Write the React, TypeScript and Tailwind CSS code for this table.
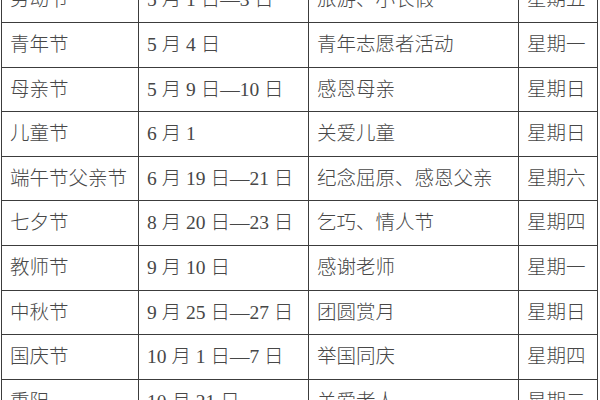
const rows: [string, string, string, string][] = [
  ["劳动节", "5 月 1 日—3 日", "旅游、小长假", "星期五"],
  ["青年节", "5 月 4 日", "青年志愿者活动", "星期一"],
  ["母亲节", "5 月 9 日—10 日", "感恩母亲", "星期日"],
  ["儿童节", "6 月 1", "关爱儿童", "星期日"],
  ["端午节父亲节", "6 月 19 日—21 日", "纪念屈原、感恩父亲", "星期六"],
  ["七夕节", "8 月 20 日—23 日", "乞巧、情人节", "星期四"],
  ["教师节", "9 月 10 日", "感谢老师", "星期一"],
  ["中秋节", "9 月 25 日—27 日", "团圆赏月", "星期日"],
  ["国庆节", "10 月 1 日—7 日", "举国同庆", "星期四"],
  ["重阳", "10 月 21 日", "关爱老人", "星期二"],
];

export default function App() {
  return (
    <div className="h-[400px] w-[600px] overflow-hidden bg-white">
      <table
        className="-mt-[22.6px] ml-[1px] w-[597px] table-fixed border-collapse text-[19.5px] leading-none text-[#474747]"
        style={{ fontFamily: '"Liberation Serif", "Noto Sans CJK SC", serif' }}
      >
        <colgroup>
          <col className="w-[137px]" />
          <col className="w-[170px]" />
          <col className="w-[210px]" />
          <col />
        </colgroup>
        <tbody>
          {rows.map((r) => (
            <tr key={r[0]} className="h-[44.6px]">
              {r.map((c, i) => (
                <td
                  key={i}
                  className="whitespace-nowrap border-[1.5px] border-[#3c3c3c] px-[8px] align-middle font-light"
                >
                  {c}
                </td>
              ))}
            </tr>
          ))}
        </tbody>
      </table>
    </div>
  );
}
